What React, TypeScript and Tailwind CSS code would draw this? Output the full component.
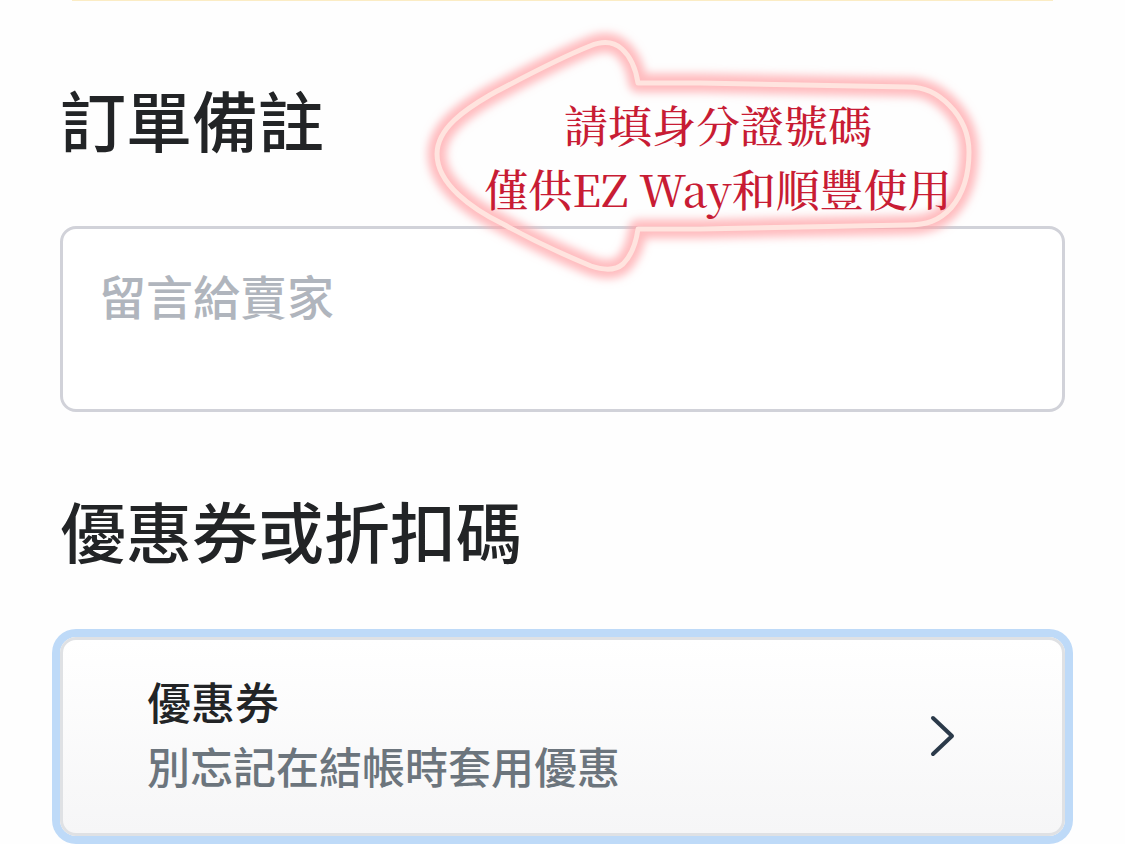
function NoteCallout() {
  return (
    <div className="pointer-events-none absolute left-[420px] top-5 h-[272px] w-[580px]">
      <svg className="absolute inset-0 h-full w-full" viewBox="420 20 580 272" fill="none" aria-hidden="true">
        <defs>
          <filter id="glow" x="-20%" y="-20%" width="140%" height="140%">
            <feGaussianBlur stdDeviation="4.5" />
          </filter>
          <path
            id="arrow"
            d="M638 83L700 83L908 87C925 87 937 93 949 105C963 119 969 134 969 152C969 172 964 193 951 208C939 221 926 225 908 225L700 229L638 229C636 243 631 256 623 264C615 271 603 270 591 266C562 254 532 240 503 224C472 209 437 184 437 154C437 128 466 109 490 95C524 77 557 59 590 46C602 41 613 41 622 49C632 58 636 70 638 83Z"
            strokeLinejoin="round"
          />
        </defs>
        <use href="#arrow" stroke="#ffa6a9" strokeOpacity="0.75" strokeWidth="19" filter="url(#glow)" />
        <use href="#arrow" stroke="#ffe4df" strokeWidth="5" />
      </svg>
      <p className="relative pt-[72px] pl-4 text-center font-['Noto_Serif_CJK_TC','Noto_Serif_TC','Liberation_Serif','Noto_Sans_CJK_TC',serif] text-[44px] leading-[64px] font-medium whitespace-nowrap text-[#c81c34]">
        請填身分證號碼
        <br />
        僅供EZ Way和順豐使用
      </p>
    </div>
  );
}

export default function App() {
  return (
    <main
      lang="zh-Hant"
      className="relative bg-[#fefefe] px-[60px] pb-2 font-['Noto_Sans_CJK_TC',sans-serif] text-[#222426]"
    >
      <div className="mx-3 h-px bg-[#fbecc4]" />
      <section className="pt-[77px]">
        <h2 className="text-[66px] leading-[80px] font-medium">
          <label htmlFor="note">訂單備註</label>
        </h2>
        <textarea
          id="note"
          placeholder="留言給賣家"
          className="mt-[68px] block h-[186px] w-full resize-none rounded-2xl border-3 border-[#d1d2d9] bg-white px-9 py-[34px] text-[47px] leading-[64px] font-medium outline-none placeholder:text-[#b0b5bd]"
        />
      </section>
      <section className="pt-[77px]">
        <h2 className="text-[66px] leading-[80px] font-medium">優惠券或折扣碼</h2>
        <button
          type="button"
          className="mt-[68px] flex h-[199px] w-full items-center justify-between rounded-2xl border-3 border-[#dfe1e4] bg-linear-to-b from-white to-[#f6f6f7] pr-[106px] pl-[84px] text-left ring-8 ring-[#bedaf8]"
        >
          <span className="flex flex-col pb-2">
            <span className="text-[44px] leading-[64px] font-medium">優惠券</span>
            <span className="text-[43px] leading-[64px] font-medium text-[#6c757d]">別忘記在結帳時套用優惠</span>
          </span>
          <svg className="h-11 w-7" viewBox="0 0 28 44" fill="none" aria-hidden="true">
            <path
              d="M5 3L24 21L5 39"
              stroke="#2b3a4a"
              strokeWidth="4"
              strokeLinecap="round"
              strokeLinejoin="round"
            />
          </svg>
        </button>
      </section>
      <NoteCallout />
    </main>
  );
}
